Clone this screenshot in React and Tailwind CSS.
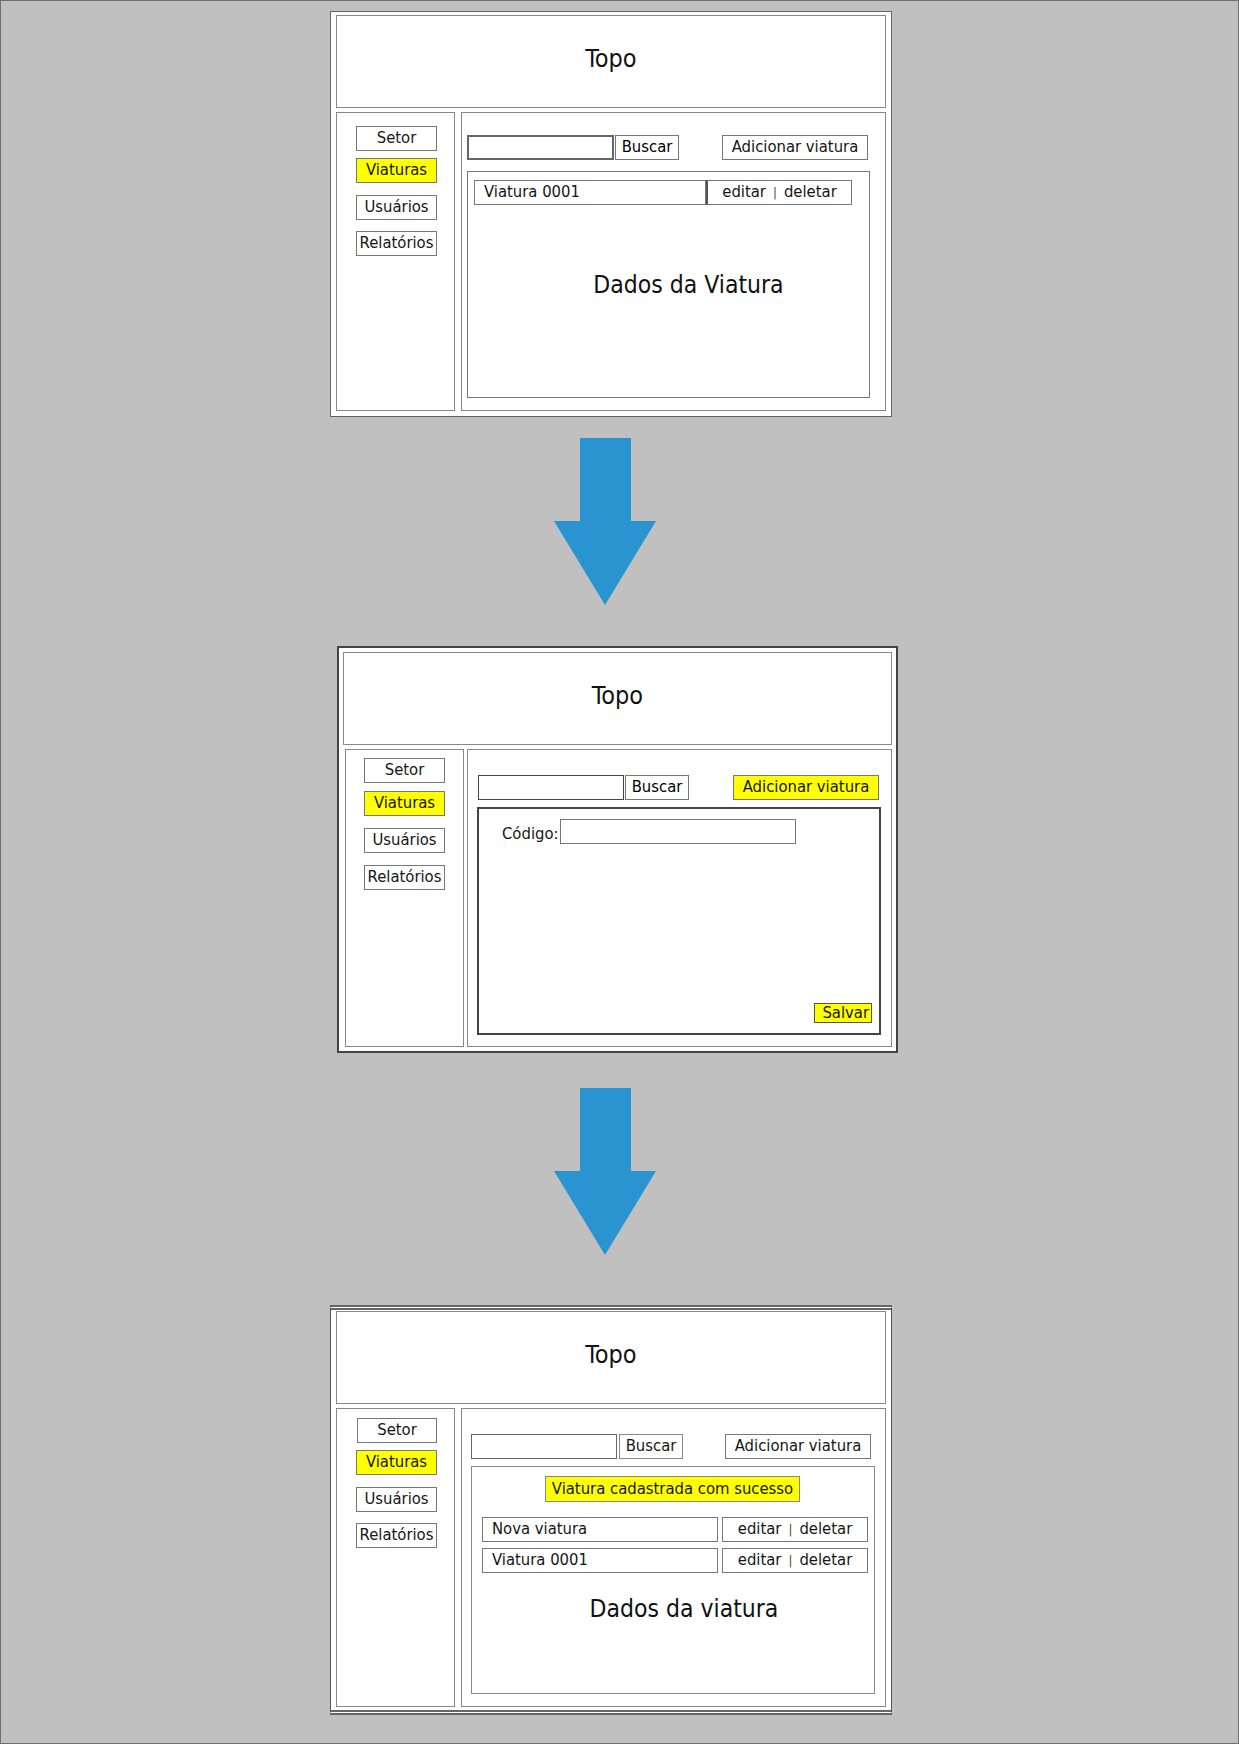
import React from 'react';

const font = { fontFamily: '"DejaVu Sans Condensed", "DejaVu Sans", sans-serif' };

// caixinha de botão / campo do wireframe
const Btn = ({ children, className = '' }) => (
  <div className={`flex items-center justify-center border border-[#777] h-[25px] text-[16.5px] leading-none text-[#151515] ${className}`}>
    {children}
  </div>
);

const Arrow = ({ className = '' }) => (
  <svg width="102" height="167" viewBox="0 0 102 167" className={className}>
    <path d="M26 0 H77 V83 H102 L51 167 L0 83 H26 Z" fill="#2994cf" />
  </svg>
);

const Topo = ({ className = '' }) => (
  <div className={`flex items-center justify-center h-[93px] pb-[5px] border border-[#888] bg-white text-[25px] text-[#111] ${className}`}>
    Topo
  </div>
);

const Row = ({ name, nameW, gap, actW }) => (
  <div className="flex h-[25px]">
    <div className={`flex items-center border border-[#777] pl-[9px] text-[16.5px] text-[#151515] ${nameW}`}>{name}</div>
    <div className={`flex items-center justify-center border border-[#777] text-[16.5px] text-[#151515] ${gap} ${actW}`}>
      editar <span className="mx-[7px] text-[13px] text-[#444]">|</span> deletar
    </div>
  </div>
);

export default function App() {
  return (
    <div style={font} className="w-[1239px] h-[1744px] bg-[#c0c0c0] border border-[#707070] flex flex-col">
      {/* Tela 1 - listagem */}
      <div className="ml-[329px] mt-[10px] w-[562px] h-[406px] border border-[#666] bg-white px-[5px] pt-[3px] pb-[5px] flex flex-col">
        <Topo />
        <div className="mt-[4px] flex gap-[6px] flex-1">
          <div className="w-[119px] border border-[#888] pl-[19px] pt-[13px] flex flex-col">
            <Btn className="w-[81px]">Setor</Btn>
            <Btn className="w-[81px] mt-[7px] bg-[#ffff00]">Viaturas</Btn>
            <Btn className="w-[81px] mt-[12px]">Usuários</Btn>
            <Btn className="w-[81px] mt-[11px]">Relatórios</Btn>
          </div>
          <div className="flex-1 border border-[#888] pl-[5px] pr-[15px] pt-[22px] pb-[12px] flex flex-col">
            <div className="flex items-center">
              <div className="w-[147px] h-[25px] border-2 border-[#666]" />
              <Btn className="w-[64px] ml-[1px] text-black">Buscar</Btn>
              <Btn className="w-[146px] ml-auto mr-[2px]">Adicionar viatura</Btn>
            </div>
            <div className="mt-[11px] flex-1 border border-[#777] pl-[6px] pt-[8px] flex flex-col">
              <Row name="Viatura 0001" nameW="w-[232px]" gap="" actW="w-[146px] border-l-2 border-l-[#555]" />
              <div className="flex-1 flex items-center justify-center pl-[34px] pb-[31px] text-[24.5px] text-[#111]">
                Dados da Viatura
              </div>
            </div>
          </div>
        </div>
      </div>

      <Arrow className="ml-[553px] mt-[21px]" />

      {/* Tela 2 - cadastro */}
      <div className="ml-[336px] mt-[41px] w-[561px] h-[407px] border-2 border-[#444] bg-white px-[4px] pt-[4px] pb-[4px] flex flex-col">
        <Topo className="h-[93px]" />
        <div className="mt-[4px] flex gap-[3px] flex-1">
          <div className="w-[119px] ml-[2px] border border-[#888] pl-[18px] pt-[8px] flex flex-col">
            <Btn className="w-[81px]">Setor</Btn>
            <Btn className="w-[81px] mt-[8px] bg-[#ffff00]">Viaturas</Btn>
            <Btn className="w-[81px] mt-[12px]">Usuários</Btn>
            <Btn className="w-[81px] mt-[12px]">Relatórios</Btn>
          </div>
          <div className="flex-1 border border-[#888] pl-[9px] pr-[10px] pt-[25px] pb-[11px] flex flex-col">
            <div className="flex items-center pl-[1px]">
              <div className="w-[146px] h-[25px] border border-[#444]" />
              <Btn className="w-[64px] ml-[1px] border-[#555] text-black">Buscar</Btn>
              <Btn className="w-[146px] ml-auto mr-[2px] bg-[#ffff00]">Adicionar viatura</Btn>
            </div>
            <div className="mt-[7px] flex-1 border-2 border-[#444] pl-[23px] pr-[7px] pt-[7px] pb-[10px] flex flex-col">
              <div className="flex items-center">
                <span className="text-[16.5px] text-[#151515] mt-[6px]">Código:</span>
                <div className="w-[236px] h-[25px] border border-[#777] ml-[1px]" />
              </div>
              <div className="mt-auto self-end w-[58px] h-[20px] border border-[#555] bg-[#ffff00] flex items-center justify-end pr-[2px] text-[16.5px] text-[#151515]">
                Salvar
              </div>
            </div>
          </div>
        </div>
      </div>

      <Arrow className="ml-[553px] mt-[35px]" />

      {/* Tela 3 - resultado */}
      <div className="ml-[329px] mt-[50px] w-[562px] h-[410px] border-x border-[#555] border-y-[5px] border-double border-y-[#666] bg-white px-[5px] pt-[1px] pb-[3px] flex flex-col">
        <Topo />
        <div className="mt-[4px] flex gap-[6px] flex-1">
          <div className="w-[119px] border border-[#888] pl-[20px] pt-[9px] flex flex-col">
            <Btn className="w-[80px]">Setor</Btn>
            <Btn className="w-[81px] -ml-[1px] mt-[7px] bg-[#ffff00]">Viaturas</Btn>
            <Btn className="w-[81px] -ml-[1px] mt-[12px]">Usuários</Btn>
            <Btn className="w-[81px] -ml-[1px] mt-[11px]">Relatórios</Btn>
          </div>
          <div className="flex-1 border border-[#888] pl-[9px] pr-[10px] pt-[25px] pb-[12px] flex flex-col">
            <div className="flex items-center">
              <div className="w-[146px] h-[25px] border border-[#666]" />
              <Btn className="w-[64px] ml-[2px] border-[#888]">Buscar</Btn>
              <Btn className="w-[146px] ml-auto mr-[4px]">Adicionar viatura</Btn>
            </div>
            <div className="mt-[7px] flex-1 border border-[#888] pl-[10px] pt-[9px] flex flex-col">
              <div className="ml-[63px] w-[255px] h-[26px] border border-[#888] bg-[#ffff00] flex items-center justify-center text-[16.5px] text-[#151515]">
                Viatura cadastrada com sucesso
              </div>
              <div className="mt-[15px] flex flex-col gap-[6px]">
                <Row name="Nova viatura" nameW="w-[236px]" gap="ml-[4px]" actW="w-[146px]" />
                <Row name="Viatura 0001" nameW="w-[236px]" gap="ml-[4px]" actW="w-[146px]" />
              </div>
              <div className="mt-[18px] flex justify-center pl-[12px] text-[24.5px] text-[#111]">
                Dados da viatura
              </div>
            </div>
          </div>
        </div>
      </div>
    </div>
  );
}
